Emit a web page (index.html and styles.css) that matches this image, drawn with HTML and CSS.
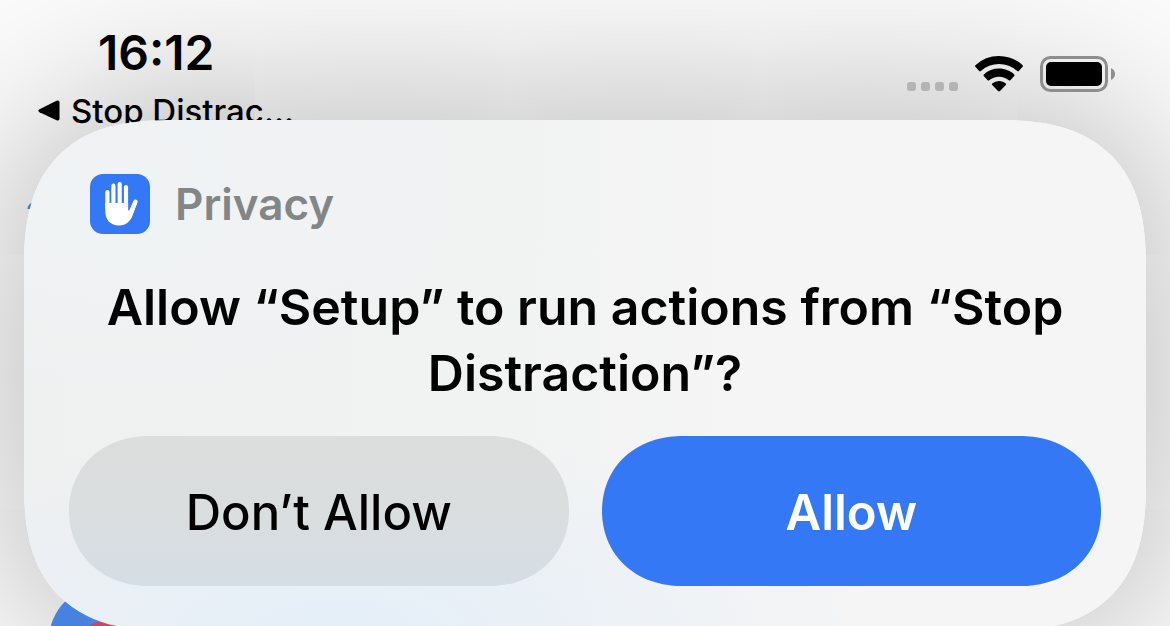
FILE: index.html
```html
<!DOCTYPE html>
<html lang="en">
<head>
<meta charset="utf-8">
<meta name="viewport" content="width=device-width, initial-scale=1">
<title>Privacy</title>
<link rel="stylesheet" href="styles.css">
</head>
<body>
<main class="screen">
  <svg class="peek" viewBox="0 0 120 440" aria-hidden="true">
    <path fill="#2f78d8" d="M27.500 9C28 5 30 3 36 1V9z"/>
    <circle cx="103" cy="440" r="54" fill="#4682e0"/>
    <rect x="84" y="422" width="60" height="40" rx="16" fill="#cf4560"/>
  </svg>
  <header class="status">
    <div class="status-left">
      <time class="clock">16:12</time>
      <a class="back" href="#">
        <svg class="back-arrow" viewBox="0 0 22 22" aria-hidden="true"><path d="M1.500 9.300 18.500.8Q21.500-.3 21.500 2.500V18.500Q21.500 21.300 18.500 20.200L1.500 12.200Q-.8 10.800 1.500 9.300Z"/></svg>
        <span>Stop Distrac...</span>
      </a>
    </div>
    <div class="status-right">
      <div class="signal" aria-label="No signal"><i></i><i></i><i></i><i></i></div>
      <svg class="wifi" viewBox="0 0 50 36" role="img" aria-label="Wi-Fi">
        <path d="M25 0C34.500 0 43 3.700 48.600 9.200Q49.400 10 48.600 10.800L44.800 15Q44 15.800 43.200 15A27 27 0 0 0 6.800 15Q6 15.800 5.200 15L1.400 10.800Q.6 10 1.400 9.200A34.600 34.600 0 0 1 25 0Z"/>
        <path d="M25 12.600C31.100 12.600 36.500 15 40.200 18.400Q41 19.200 40.200 20L36.400 24.200Q35.600 25 34.800 24.200A15.300 15.300 0 0 0 15.200 24.200Q14.400 25 13.600 24.200L9.800 20Q9 19.200 9.800 18.400A22.800 22.800 0 0 1 25 12.600Z"/>
        <path d="M25 25C27.700 25 30 26 31.800 27.500Q32.600 28.300 31.800 29.100L26 35.100Q25 36 24 35.100L18.200 29.100Q17.400 28.300 18.200 27.500A10.500 10.500 0 0 1 25 25Z"/>
      </svg>
      <svg class="battery" viewBox="0 0 75 36" role="img" aria-label="Battery full">
        <rect x="1.500" y="1.500" width="65" height="33" rx="9" fill="none" stroke="#8e8e8e" stroke-width="3"/>
        <rect x="6" y="6" width="56" height="24" rx="5"/>
        <path d="M71 12Q75 14 75 18T71 24Z" fill="#8e8e8e"/>
      </svg>
    </div>
  </header>
  <section class="card" role="dialog" aria-labelledby="question">
    <div class="source">
      <svg class="app-icon" viewBox="0 0 60 60" aria-hidden="true">
        <rect width="60" height="60" rx="13" fill="#3478f6"/>
        <g fill="none" stroke="#fff" stroke-width="4.200" stroke-linecap="round">
          <path d="M17.400 18V34M23.400 11.700V34M29.700 10.200V34M36 13V34"/>
          <path d="M45.500 27.800 40 40.500"/>
        </g>
        <path fill="#fff" d="M15.300 29H38.100V35.500C38.100 37 39 37 40 35L43.600 26.900 47.300 28.600 42.800 41C40.300 47.800 35.500 51.500 29.500 51.500 20.500 51.500 15.300 46 15.300 37Z"/>
      </svg>
      <span class="source-name">Privacy</span>
    </div>
    <h1 class="question" id="question">Allow “Setup” to run actions from “Stop Distraction”?</h1>
    <div class="actions">
      <button class="button button-deny" type="button">Don’t Allow</button>
      <button class="button button-allow" type="button">Allow</button>
    </div>
  </section>
</main>
</body>
</html>
```
FILE: styles.css
```css
* { box-sizing: border-box; }
body {
  margin: 0;
  font-family: Inter, "Liberation Sans", sans-serif;
  color: #000;
  background: #fcfcfc;
}
.screen {
  position: relative;
  height: 100vh;
  overflow: hidden;
}
.screen::before {
  content: "";
  position: absolute;
  top: 120px;
  left: 24px;
  right: 24px;
  height: 511px;
  border-radius: 122px;
  box-shadow: 0 0 190px rgba(0, 0, 0, 0.34);
}
.status {
  position: relative;
  z-index: 2;
  display: flex;
  justify-content: space-between;
  height: 120px;
  padding: 31px 55px 0 38px;
}
.clock {
  display: block;
  padding-left: 60px;
  font-size: 48px;
  font-weight: 600;
  line-height: 44px;
}
.back {
  display: flex;
  align-items: center;
  gap: 11px;
  margin-top: 16px;
  font-size: 33px;
  font-weight: 500;
  line-height: 40px;
  color: inherit;
  text-decoration: none;
}
.back-arrow { width: 22px; height: 22px; }
.status-right {
  display: flex;
  align-items: flex-end;
  gap: 16px;
  height: 61px;
}
.signal { display: flex; gap: 5px; padding-bottom: 1px; }
.signal i {
  width: 9px;
  height: 9px;
  border-radius: 3px;
  background: #b4b4b4;
}
.wifi { width: 50px; height: 36px; }
.battery { width: 75px; height: 36px; }
.peek {
  position: absolute;
  z-index: 1;
  left: 0;
  top: 200px;
  width: 120px;
  height: 440px;
}
.card {
  position: relative;
  z-index: 3;
  margin: 0 24px;
  padding: 54px 45px 45px;
  border-radius: 122px;
  background:
    radial-gradient(ellipse 540px 200px at 28% 100%, #e5eff9 0%, #e5eff900 100%),
    radial-gradient(ellipse 420px 260px at 10% 10%, #f0f3f5 0%, #f0f3f500 100%),
    linear-gradient(90deg, #eff0f0 0%, #f1f2f2 40%, #f5f5f5 65%, #f5f5f5 100%);
}
.source {
  display: flex;
  align-items: center;
  gap: 25px;
  padding-left: 21px;
}
.app-icon { width: 60px; height: 60px; }
.source-name {
  font-size: 44px;
  font-weight: 600;
  line-height: 60px;
  color: #838687;
}
.question {
  margin: 40px 0 30px;
  font-size: 50px;
  font-weight: 600;
  line-height: 66px;
  text-align: center;
}
.actions {
  display: grid;
  grid-template-columns: 1fr 1fr;
  gap: 33px;
}
.button {
  height: 150px;
  padding: 2px 0 0;
  border: 0;
  border-radius: 84px / 75px;
  font: inherit;
  font-size: 49px;
  font-weight: 500;
}
.button-deny {
  color: #000;
  background: linear-gradient(#dcdddd 0%, #dadedf 50%, #d5dde5 100%);
}
.button-allow {
  color: #fff;
  font-weight: 600;
  background: #3478f6;
}
@supports (corner-shape: superellipse(1.3)) {
  .screen::before,
  .card {
    border-radius: 150px;
    corner-shape: superellipse(1.38);
  }
  .button {
    border-radius: 80px / 75px;
    corner-shape: superellipse(1.07);
  }
}
```
